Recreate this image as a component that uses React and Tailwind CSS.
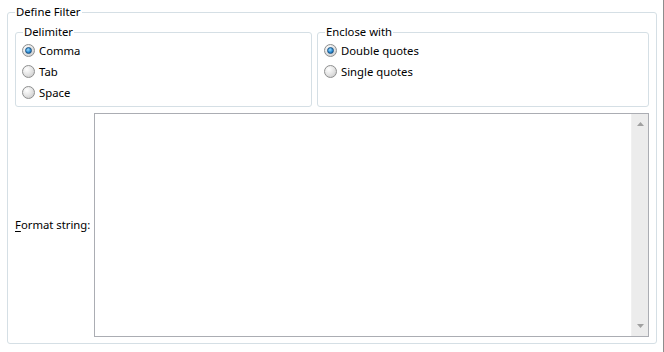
import React from "react";

function Radio({ checked, label }) {
  return (
    <div className="flex h-[21px] items-center">
      <span className="ml-[6px] flex h-[13px] w-[13px] items-center justify-center rounded-full border border-[#8e8f8f] bg-[radial-gradient(circle_at_35%_30%,#ffffff_0%,#e4e4e4_50%,#c3c3c3_100%)]">
        {checked ? (
          <span className="h-[7px] w-[7px] rounded-full border border-[#1c5180] bg-[radial-gradient(circle_at_40%_35%,#9ddcff_0%,#2c8ed6_55%,#0f4f8a_100%)]" />
        ) : null}
      </span>
      <span className="ml-[4px] whitespace-nowrap leading-[16px]">{label}</span>
    </div>
  );
}

export default function App() {
  return (
    <div
      className="relative h-[352px] w-[664px] overflow-hidden border-r border-[#8d8d8d] bg-white text-[11.3px] text-black"
      style={{ fontFamily: '"Noto Sans", "Open Sans", sans-serif' }}
    >
      <fieldset className="ml-[7px] mt-[4px] flex h-[340px] w-[650px] flex-col rounded-[3px] border border-[#d5dfe5] px-[7px] pb-[6px] pt-[4px]">
        <legend className="px-[1px] leading-[16px]">Define Filter</legend>
        <div className="flex gap-[5px]">
          <fieldset className="h-[83px] w-[297px] rounded-[3px] border border-[#d5dfe5] p-0">
            <legend className="ml-[7px] px-[1px] leading-[16px]">Delimiter</legend>
            <Radio checked label="Comma" />
            <Radio label="Tab" />
            <Radio label="Space" />
          </fieldset>
          <fieldset className="h-[83px] w-[332px] rounded-[3px] border border-[#d5dfe5] p-0">
            <legend className="ml-[7px] px-[1px] leading-[16px]">Enclose with</legend>
            <Radio checked label="Double quotes" />
            <Radio label="Single quotes" />
          </fieldset>
        </div>
        <div className="mt-[6px] flex h-[224px]">
          <div className="flex w-[79px] items-center">
            <span className="whitespace-nowrap leading-[16px]">
              <span className="underline decoration-1 underline-offset-[2px]">F</span>ormat string:
            </span>
          </div>
          <div className="flex flex-1 border border-[#abadb3] bg-white">
            <div className="flex-1" />
            <div className="flex w-[17px] flex-col items-center justify-between border-l border-[#f0f0f0] bg-[#ececec] py-[8px]">
              <svg width="7" height="4" viewBox="0 0 7 4">
                <path d="M3.5 0 L7 4 L0 4 Z" fill="#a0a0a0" />
              </svg>
              <svg width="7" height="4" viewBox="0 0 7 4">
                <path d="M0 0 L7 0 L3.5 4 Z" fill="#a0a0a0" />
              </svg>
            </div>
          </div>
        </div>
      </fieldset>
    </div>
  );
}
